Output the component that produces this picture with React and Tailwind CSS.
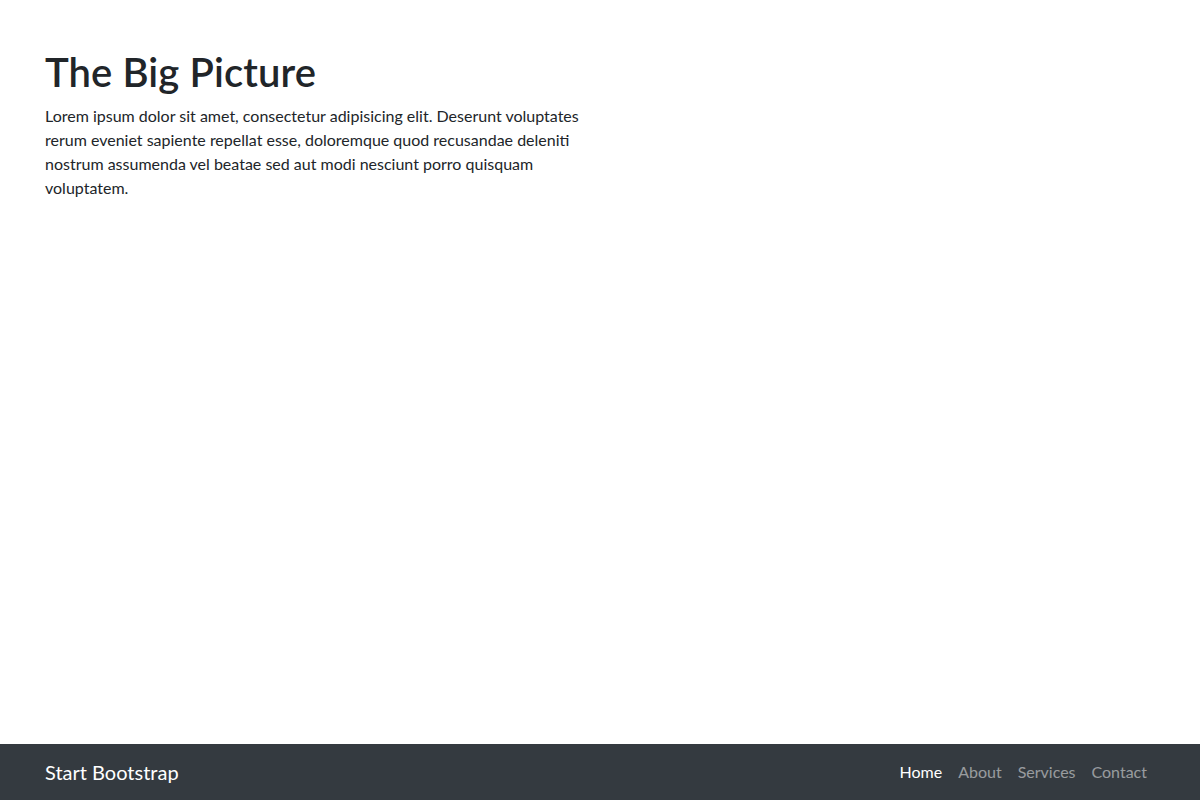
export default function App() {
  const links = [
    { label: "Home", active: true },
    { label: "About" },
    { label: "Services" },
    { label: "Contact" },
  ];

  return (
    <div className="flex h-screen flex-col bg-white font-['Lato','Noto_Sans',sans-serif] text-[#212529]">
      <section className="flex-1">
        <div className="mx-auto w-[1140px] px-[15px]">
          <div className="w-[540px]">
            <h1 className="mt-12 mb-2 text-[40px] leading-[48px] font-semibold tracking-[0.1px]">The Big Picture</h1>
            <p className="text-base leading-6">
              Lorem ipsum dolor sit amet, consectetur adipisicing elit. Deserunt voluptates
              rerum eveniet sapiente repellat esse, doloremque quod recusandae deleniti
              nostrum assumenda vel beatae sed aut modi nesciunt porro quisquam
              voluptatem.
            </p>
          </div>
        </div>
      </section>

      <nav className="h-14 bg-[#343a40] py-2">
        <div className="mx-auto flex w-[1140px] items-center justify-between px-[15px]">
          <a href="#" className="py-[5px] text-xl leading-[30px] text-white">
            Start Bootstrap
          </a>
          <ul className="flex">
            {links.map((l) => (
              <li key={l.label}>
                <a
                  href="#"
                  className={
                    l.active
                      ? "block px-2 py-2 text-base leading-6 text-white"
                      : "block px-2 py-2 text-base leading-6 text-white/50"
                  }
                >
                  {l.label}
                </a>
              </li>
            ))}
          </ul>
        </div>
      </nav>
    </div>
  );
}
